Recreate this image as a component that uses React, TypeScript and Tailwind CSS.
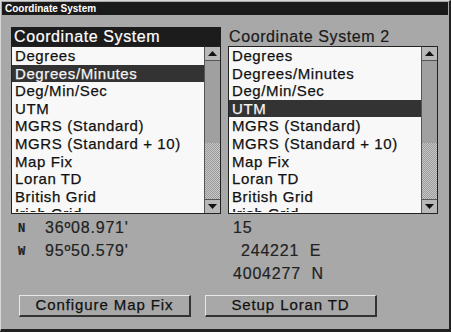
import React from "react";

const items = [
  "Degrees",
  "Degrees/Minutes",
  "Deg/Min/Sec",
  "UTM",
  "MGRS (Standard)",
  "MGRS (Standard + 10)",
  "Map Fix",
  "Loran TD",
  "British Grid",
  "Irish Grid",
];

function ScrollBar() {
  return (
    <div className="flex w-[16px] flex-col border-l border-[#555] bg-[#a8a8a8]">
      <div className="flex h-[14px] items-center justify-center border-b border-[#555] bg-[#b8b8b8]">
        <svg width="9" height="5" viewBox="0 0 9 5">
          <polygon points="0,5 9,5 4.5,0" fill="#111" />
        </svg>
      </div>
      <div className="h-[82px] bg-[#a0a0a0]" />
      <div
        className="flex-1"
        style={{
          backgroundImage:
            "repeating-conic-gradient(#c8c8c8 0% 25%, #9a9a9a 0% 50%)",
          backgroundSize: "2px 2px",
        }}
      />
      <div className="flex h-[14px] items-center justify-center border-t border-[#555] bg-[#b8b8b8]">
        <svg width="9" height="5" viewBox="0 0 9 5">
          <polygon points="0,0 9,0 4.5,5" fill="#111" />
        </svg>
      </div>
    </div>
  );
}

function List({ selected }: { selected: number }) {
  return (
    <div className="flex h-[168px] overflow-hidden border border-[#222] bg-[#f8f8f8]">
      <div className="flex-1 overflow-hidden">
        {items.map((it, i) => (
          <div
            key={it}
            className={
              "overflow-hidden whitespace-nowrap pl-[3px] text-[15px] tracking-[0.6px] [-webkit-text-stroke:0.25px] " +
              (i === items.length - 1
                ? "h-[7px] pt-[3px] leading-[12px] "
                : "h-[17.6px] leading-[17.6px] ") +
              (i === selected ? "bg-[#333] text-[#f4f4f4]" : "text-[#111]")
            }
          >
            {it}
          </div>
        ))}
      </div>
      <ScrollBar />
    </div>
  );
}

const btn =
  "flex h-[22px] w-[172px] items-center justify-center border-l border-t border-b-2 border-r-2 border-l-[#e8e8e8] border-t-[#e8e8e8] border-b-[#333] border-r-[#333] text-[15px] tracking-[0.9px] text-[#111] [-webkit-text-stroke:0.25px]";

export default function App() {
  return (
    <div
      className="flex h-[332px] w-[451px] flex-col border-l border-t border-b-[3px] border-r-[2px] border-l-[#d8d8d8] border-t-[#d8d8d8] border-b-[#222] border-r-[#222] bg-[#a8a8a8]"
      style={{ fontFamily: '"Liberation Sans", Arial, sans-serif' }}
    >
      <div className="mx-[1px] mt-[1px] h-[13px] bg-[#1a1a1a] pl-[3px] text-[10px] font-bold leading-[13px] text-white">
        Coordinate System
      </div>
      <div className="flex gap-[7px] pl-[10px] pt-[12px]">
        <div className="flex w-[210px] flex-col">
          <div className="h-[19px] bg-[#1c1c1c] pl-[3px] text-[16px] leading-[19px] tracking-[0.6px] text-white [-webkit-text-stroke:0.2px]">
            Coordinate System
          </div>
          <List selected={1} />
        </div>
        <div className="flex w-[210px] flex-col">
          <div className="h-[19px] pl-[1px] text-[16px] leading-[19px] tracking-[0.6px] text-[#1a1a1a] [-webkit-text-stroke:0.2px]">
            Coordinate System 2
          </div>
          <List selected={3} />
        </div>
      </div>
      <div className="flex pt-[2px] text-[16px] leading-[14px] tracking-[0.8px] text-[#222] [-webkit-text-stroke:0.2px]">
        <div className="w-[216px] pl-[17px]">
          <div className="flex h-[23px] items-center">
            <span className="w-[27px] font-bold" style={{ fontFamily: '"DejaVu Sans Mono", monospace', fontSize: 12 }}>N</span>
            <span>36º08.971'</span>
          </div>
          <div className="flex h-[23px] items-center">
            <span className="w-[27px] font-bold" style={{ fontFamily: '"DejaVu Sans Mono", monospace', fontSize: 12 }}>W</span>
            <span>95º50.579'</span>
          </div>
        </div>
        <div className="pl-[16px]">
          <div className="flex h-[23px] items-center">15</div>
          <div className="flex h-[23px] items-center pl-[8px]">244221&nbsp;&nbsp;E</div>
          <div className="flex h-[23px] items-center">4004277&nbsp;&nbsp;N</div>
        </div>
      </div>
      <div className="flex gap-[14px] pl-[18px] pt-[10px]">
        <div className={btn}>Configure Map Fix</div>
        <div className={btn}>Setup Loran TD</div>
      </div>
    </div>
  );
}
